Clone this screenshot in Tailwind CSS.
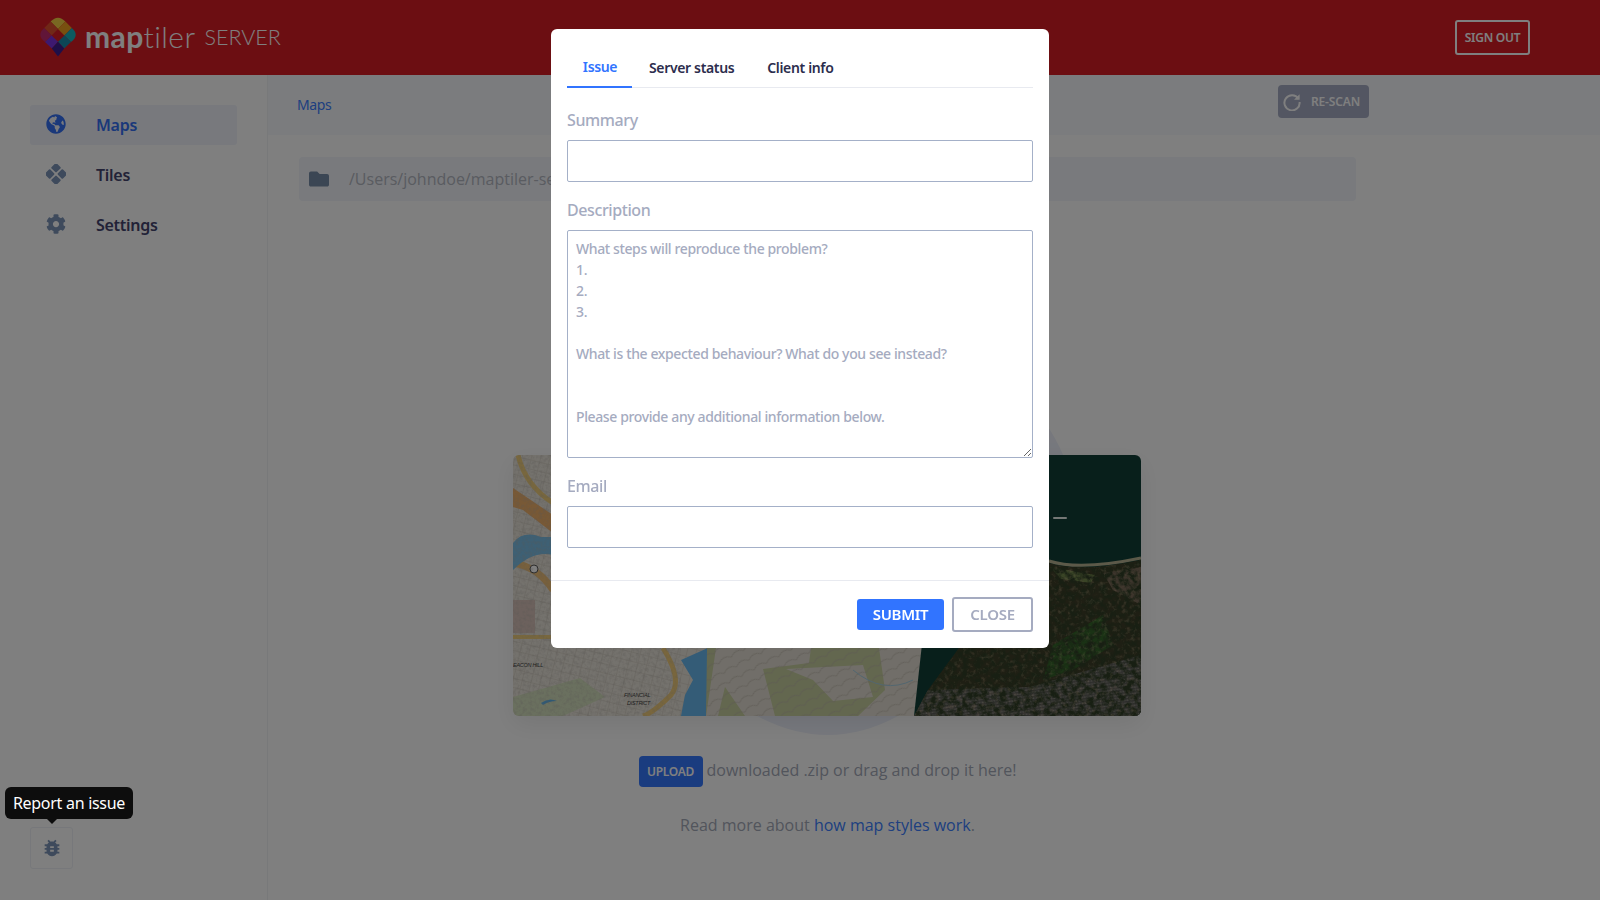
<!DOCTYPE html>
<html lang="en">
<head>
    <meta charset="UTF-8">
    <meta name="viewport" content="width=device-width, initial-scale=1.0">
    <title>MapTiler Server</title>
    <script src="https://cdn.jsdelivr.net/npm/@tailwindcss/browser@4"></script>
</head>
<body class="h-[900px] overflow-hidden bg-white font-['Noto_Sans',sans-serif] tracking-[-0.28px]">
    <!-- page under the dialog -->
    <header class="h-[75px] bg-[#d91d25] flex items-center justify-between pl-[40px] pr-[70px]">
        <div class="flex items-center">
            <svg class="w-[36px] h-[40px] mt-[-1px]" viewBox="0 0 36 40">
                <path d="M18 12 L10.6 4.6 Q18 -3 25.4 4.6 Z" fill="#f2cf45"/>
                <polygon points="10.6,4.6 18,12 11.6,18.4 4.2,11" fill="#e0502f"/>
                <polygon points="25.4,4.6 31.8,11 24.4,18.4 18,12" fill="#f0a020"/>
                <path d="M4.2 11 L11.6 18.4 L5 25 Q-4 18 4.2 11 Z" fill="#c22a70"/>
                <path d="M31.8 11 L24.4 18.4 L31 25 Q40 18 31.8 11 Z" fill="#18b4c0"/>
                <polygon points="11.6,18.4 18,24.8 11.8,31.4 5,25" fill="#7a32e0"/>
                <polygon points="24.4,18.4 31,25 24.2,31.4 18,24.8" fill="#1a8cac"/>
                <polygon points="18,24.8 24.2,31.4 18,39.5 11.8,31.4" fill="#3c1f90"/>
            </svg>
            <span class="ml-[9px] mt-[-3px] text-[30px] leading-none text-white font-['Lato',sans-serif] tracking-[0.4px]"><b class="font-bold">map</b><span class="font-light">tiler</span></span>
            <span class="ml-[9px] mt-[1px] text-[21.5px] leading-none text-white font-['Lato',sans-serif] font-light tracking-normal">SERVER</span>
        </div>
        <a class="h-[35px] w-[75px] border-2 border-white rounded-[3px] flex items-center justify-center text-[12px] font-semibold text-white">SIGN OUT</a>
    </header>

    <div class="flex h-[825px]">
        <aside class="w-[268px] shrink-0 border-r border-[#f1f2f4] pl-[30px] pr-[30px] pt-[30px] pb-[31px] flex flex-col justify-between">
            <nav class="flex flex-col gap-[10px]">
                <a class="h-[40px] rounded-[3px] bg-[#f0f3fa] flex items-center pl-[16px] text-[16px] font-semibold text-[#3470f5]">
                    <svg class="w-[20px] h-[20px] mr-[30px] mt-[-2px]" viewBox="0 0 496 512" fill="#3470f5"><path d="M248 8C111.03 8 0 119.03 0 256s111.03 248 248 248 248-111.03 248-248S384.97 8 248 8zm82.29 357.6c-3.9 3.88-7.99 7.95-11.31 11.28-2.99 3-5.1 6.7-6.17 10.71-1.51 5.66-2.73 11.38-4.77 16.87l-17.39 46.85c-13.76 3-28 4.69-42.65 4.69v-27.38c1.69-12.62-7.64-36.26-22.63-51.25-6-6-9.37-14.14-9.37-22.63v-32.01c0-11.64-6.27-22.34-16.46-27.97-14.37-7.95-34.81-19.06-48.81-26.11-11.48-5.78-22.1-13.14-31.65-21.75l-.8-.72a114.792 114.792 0 0 1-18.06-20.74c-9.38-13.77-24.66-36.42-34.59-51.14 20.47-45.5 57.36-82.04 103.2-101.89l24.01 12.01C203.48 89.74 216 82.01 216 70.11v-11.3c7.99-1.29 16.12-2.11 24.45-2.42l28.3 28.3c6.25 6.25 6.25 16.38 0 22.63L264 112l-10.34 10.34c-3.12 3.12-3.12 8.19 0 11.31l4.69 4.69c3.12 3.12 3.12 8.19 0 11.31l-8 8a8.008 8.008 0 0 1-5.67 2.34h-8.99c-2.08 0-4.08.81-5.58 2.27l-9.92 9.65a8.008 8.008 0 0 0-1.58 9.31l15.59 31.19c2.66 5.32-1.21 11.58-7.15 11.58h-5.64c-1.93 0-3.79-.7-5.24-1.96l-9.28-8.06a16.017 16.017 0 0 0-15.55-3.1l-31.17 10.39a11.95 11.95 0 0 0-8.17 11.34c0 4.53 2.56 8.66 6.61 10.69l11.08 5.54c9.41 4.71 19.79 7.16 30.31 7.16s22.59 27.29 32 32h66.75c8.49 0 16.62 3.37 22.63 9.37l13.69 13.69a30.503 30.503 0 0 1 8.93 21.57 46.536 46.536 0 0 1-13.72 32.98zM417 274.25c-5.79-1.45-10.84-5-14.15-9.97l-17.98-26.97a23.97 23.97 0 0 1 0-26.62l19.59-29.38c2.32-3.47 5.5-6.29 9.24-8.15l12.98-6.49C440.2 193.59 448 223.87 448 256c0 8.67-.74 17.16-1.82 25.54L417 274.25z"/></svg>
                    Maps
                </a>
                <a class="h-[40px] flex items-center pl-[16px] text-[16px] font-semibold text-[#45456f]">
                    <svg class="w-[20px] h-[20px] mr-[30px] mt-[-2px]" viewBox="0 0 20 20" fill="#7c94b8"><rect x="6.4" y="0.1" width="7.2" height="7.2" rx="1" transform="rotate(45 10 3.7)"/><rect x="6.4" y="12.7" width="7.2" height="7.2" rx="1" transform="rotate(45 10 16.3)"/><rect x="0.1" y="6.4" width="7.2" height="7.2" rx="1" transform="rotate(45 3.7 10)"/><rect x="12.7" y="6.4" width="7.2" height="7.2" rx="1" transform="rotate(45 16.3 10)"/></svg>
                    Tiles
                </a>
                <a class="h-[40px] flex items-center pl-[16px] text-[16px] font-semibold text-[#45456f]">
                    <svg class="w-[20px] h-[20px] mr-[30px] mt-[-2px]" viewBox="0 0 512 512" fill="#7c94b8"><path d="M487.4 315.7l-42.6-24.6c4.3-23.2 4.3-47 0-70.2l42.6-24.6c4.9-2.8 7.1-8.6 5.5-14-11.1-35.6-30-67.8-54.7-94.6-3.8-4.1-10-5.1-14.8-2.3L380.8 110c-17.9-15.4-38.5-27.3-60.8-35.1V25.8c0-5.6-3.9-10.5-9.4-11.7-36.7-8.2-74.3-7.8-109.2 0-5.5 1.2-9.4 6.1-9.4 11.7V75c-22.2 7.9-42.8 19.8-60.8 35.1L88.7 85.5c-4.9-2.8-11-1.9-14.8 2.3-24.7 26.7-43.6 58.9-54.7 94.6-1.7 5.4.6 11.2 5.5 14L67.3 221c-4.3 23.2-4.3 47 0 70.2l-42.6 24.6c-4.9 2.8-7.1 8.6-5.5 14 11.1 35.6 30 67.8 54.7 94.6 3.8 4.1 10 5.1 14.8 2.3l42.6-24.6c17.9 15.4 38.5 27.3 60.8 35.1v49.2c0 5.6 3.9 10.5 9.4 11.7 36.7 8.2 74.3 7.8 109.2 0 5.5-1.2 9.4-6.1 9.4-11.7v-49.2c22.2-7.9 42.8-19.8 60.8-35.1l42.6 24.6c4.9 2.8 11 1.9 14.8-2.3 24.7-26.7 43.6-58.9 54.7-94.6 1.5-5.5-.7-11.3-5.6-14.1zM256 336c-44.1 0-80-35.9-80-80s35.9-80 80-80 80 35.9 80 80-35.9 80-80 80z"/></svg>
                    Settings
                </a>
            </nav>
            <button class="w-[43px] h-[42px] border border-[#eef0f6] rounded-[3px] flex items-center justify-center">
                <svg class="w-[22px] h-[22px]" viewBox="0 0 24 24" fill="#7c94b8"><path d="M20 8h-2.81c-.45-.78-1.07-1.45-1.82-1.96L17 4.41 15.59 3l-2.17 2.17C12.96 5.06 12.49 5 12 5c-.49 0-.96.06-1.41.17L8.41 3 7 4.41l1.62 1.63C7.88 6.55 7.26 7.22 6.81 8H4v2h2.09c-.05.33-.09.66-.09 1v1H4v2h2v1c0 .34.04.67.09 1H4v2h2.81c1.04 1.79 2.97 3 5.19 3s4.15-1.21 5.19-3H20v-2h-2.09c.05-.33.09-.66.09-1v-1h2v-2h-2v-1c0-.34-.04-.67-.09-1H20V8zm-6 8h-4v-2h4v2zm0-4h-4v-2h4v2z"/></svg>
            </button>
        </aside>

        <main class="flex-1 min-w-0">
            <div class="h-[60px] bg-[#f6f8fc] flex items-start justify-between pl-[29px] pr-[231px] pt-[10px]">
                <a class="mt-[10px] text-[14px] leading-[20px] text-[#3c7eff] tracking-[-0.4px]">Maps</a>
                <button class="w-[91px] h-[33px] rounded-[4px] bg-[#a6acc4] flex items-center pl-[5px] gap-[10px] text-[12px] font-semibold text-white tracking-[-0.15px]">
                    <svg class="w-[18px] h-[18px]" viewBox="0 0 18 18" fill="none" stroke="#fff" stroke-width="2"><path d="M15.4 5.6A7.6 7.6 0 1 0 16.6 9"/><path d="M16.6 1.2v5.6H11z" fill="#fff" stroke="none"/></svg>
                    RE-SCAN
                </button>
            </div>
            <div class="pl-[31px] pr-[244px] pt-[22px] flex flex-col">
                <div class="h-[44px] rounded-[4px] bg-[#f2f4fa] flex items-center pl-[10px] text-[16px] tracking-normal text-[#b4b8c2] font-['Open_Sans',sans-serif]">
                    <svg class="w-[20px] h-[20px] mr-[20px]" viewBox="0 0 512 512" fill="#768ca8"><path d="M464 128H272l-64-64H48C21.49 64 0 85.49 0 112v288c0 26.51 21.49 48 48 48h416c26.51 0 48-21.49 48-48V176c0-26.51-21.49-48-48-48z"/></svg>
                    /Users/johndoe/maptiler-server
                </div>
                <div class="relative mt-[254px] flex flex-col items-center">
                    <!-- decorative blob behind the picture -->
                    <svg class="absolute left-[214px] top-0 w-[628px] h-[290px] overflow-visible" viewBox="0 0 628 290" fill="#eef1fb"><path d="M500 -70 Q536 -35 551 2 L385 261 Q315 299 244 261 Z"/></svg>
                    <div class="relative w-[628px] h-[261px] mr-px rounded-[6px] overflow-hidden shadow-[0_8px_24px_rgba(0,0,0,0.08)]">
                        <svg class="block" width="628" height="261" viewBox="0 0 628 261">
                            <defs>
                                <filter id="grit" x="0" y="0" width="100%" height="100%">
                                    <feTurbulence type="fractalNoise" baseFrequency="0.16" numOctaves="4" seed="7"/>
                                    <feColorMatrix values="0 0 0 0 0.03  0 0 0 0 0.05  0 0 0 0 0.02  3 0 0 0 -1"/>
                                </filter>
                                <filter id="glow" x="0" y="0" width="100%" height="100%">
                                    <feTurbulence type="fractalNoise" baseFrequency="0.22" numOctaves="3" seed="21"/>
                                    <feColorMatrix values="0 0 0 0 0.72  0 0 0 0 0.5  0 0 0 0 0.32  0 2.8 0 0 -1.45"/>
                                </filter>
                                <filter id="paper" x="0" y="0" width="100%" height="100%">
                                    <feTurbulence type="fractalNoise" baseFrequency="0.3" numOctaves="3" seed="3"/>
                                    <feColorMatrix values="0 0 0 0 0.45  0 0 0 0 0.43  0 0 0 0 0.4  2.4 0 0 0 -1"/>
                                </filter>
                                <pattern id="streets" width="9" height="9" patternUnits="userSpaceOnUse" patternTransform="rotate(14)">
                                    <path d="M0 0H9M0 0V9" stroke="#cfc9be" stroke-width="1" fill="none"/>
                                </pattern>
                                <pattern id="contours" width="14" height="11" patternUnits="userSpaceOnUse" patternTransform="rotate(-28)">
                                    <path d="M0 6Q7 0 14 6" stroke="#bdb4aa" stroke-width="0.8" fill="none"/>
                                </pattern>
                                <pattern id="city" width="3" height="3" patternUnits="userSpaceOnUse" patternTransform="rotate(-8)">
                                    <rect width="3" height="3" fill="#5a5a56"/>
                                    <rect x="0.5" y="0.5" width="2" height="1.5" fill="#8c8a82"/>
                                </pattern>
                                <clipPath id="land"><path d="M446 193 L500 125 L536 108 Q567 118 628 105 V261 H401 L415 235 Z"/></clipPath>
                            </defs>
                            <!-- street map -->
                            <rect width="210" height="261" fill="#e9e4da"/>
                            <rect width="210" height="261" fill="url(#streets)"/>
                            <polygon points="0,145 22,145 22,178 0,178" fill="#d9c3ba"/>
                            <polygon points="0,242 67,223 92,242 50,261 0,261" fill="#d5e0be"/>
                            <path d="M28 248q8-6 16-2q-8 0-14 4z" fill="#5fb2ea"/>
                            <polygon points="0,33 40,60 40,78 10,55 0,52" fill="#f0b26c"/>
                            <path d="M5 0 Q12 30 40 48" stroke="#f1cf7c" stroke-width="5" fill="none"/>
                            <path d="M0 108 Q25 112 40 135" stroke="#f0c078" stroke-width="7" fill="none"/>
                            <path d="M0 182H40" stroke="#f1cf7c" stroke-width="4"/>
                            <path d="M0 88 Q10 75 28 82 L40 82 L40 100 Q20 95 0 115Z" fill="#7cc0e8"/>
                            <circle cx="21" cy="114" r="4" fill="#fff" stroke="#555" stroke-width="1"/>
                            <path d="M150 193 Q170 225 158 240 Q140 258 130 261" stroke="#f2cd7a" stroke-width="5" fill="none"/>
                            <polygon points="168,205 197,192 193,261 168,261 172,240 180,225" fill="#69b8ee"/>
                            <rect width="168" height="261" filter="url(#paper)" opacity="0.35"/>
                            <text x="0" y="212" font-size="5.5" font-style="italic" fill="#444" font-family="Liberation Sans">EACON HILL</text>
                            <text x="111" y="242" font-size="5.5" font-style="italic" fill="#444" font-family="Liberation Sans">FINANCIAL</text>
                            <text x="114" y="250" font-size="5.5" font-style="italic" fill="#444" font-family="Liberation Sans">DISTRICT</text>
                            <!-- terrain map -->
                            <polygon points="197,0 430,0 401,261 193,261" fill="#c6ce9e"/>
                            <polygon points="203,193 298,193 296,208 250,214 262,261 232,261 212,232 205,261 193,261" fill="#e2ddd2"/>
                            <polygon points="273,214 350,210 360,242 320,246 300,225" fill="#e2ddd2"/>
                            <polygon points="366,193 412,193 401,261 345,261 372,235" fill="#e2ddd2"/>
                            <polygon points="197,0 430,0 401,261 193,261" fill="url(#contours)" opacity="0.8"/>
                            <path d="M340 215 Q370 240 400 225" stroke="#a5cde0" stroke-width="1" fill="none"/>
                            <path d="M408 240 L412 205" stroke="#f1cf7c" stroke-width="2" fill="none"/>
                            <!-- satellite -->
                            <polygon points="430,0 628,0 628,261 401,261" fill="#103f36"/>
                            <path d="M446 193 L500 125 L536 108 Q567 118 628 105 V261 H401 L415 235 Z" fill="#3e3f28"/>
                            <path d="M536 106 Q567 116 628 103" stroke="#b8b292" stroke-width="3" fill="none"/>
                            <polygon points="537,112 582,120 578,128 548,124" fill="#73884c"/>
                            <polygon points="540,190 590,160 600,190 560,215 530,225" fill="#35662a"/>
                            <polygon points="590,118 628,112 628,150 600,135" fill="#7a6a58"/>
                            <polygon points="401,261 415,235 517,232 628,200 628,261" fill="url(#city)"/>
                            <g clip-path="url(#land)">
                                <rect x="401" y="100" width="227" height="161" filter="url(#grit)"/>
                                <rect x="401" y="100" width="227" height="161" filter="url(#glow)" opacity="0.35"/>
                            </g>
                            <rect x="540" y="62" width="14" height="2" rx="1" fill="#e8f0ec"/>
                        </svg>
                    </div>
                    <p class="relative mt-[40px] h-[31px] flex items-center text-[16px] tracking-normal text-[#a4aab8] font-['Open_Sans',sans-serif]">
                        <button class="w-[64px] h-[31px] mr-[4px] rounded-[4px] bg-[#3478ff] text-[12px] font-semibold text-white font-['Noto_Sans',sans-serif] tracking-[-0.28px]">UPLOAD</button>
                        <span class="mt-[-3px]">downloaded .zip or drag and drop it here!</span>
                    </p>
                    <p class="relative mt-[26px] text-[16px] tracking-normal leading-[24px] text-[#a4aab8] font-['Open_Sans',sans-serif]">Read more about <a class="text-[#3c7eff]">how map styles work</a>.</p>
                </div>
            </div>
        </main>
    </div>

    <!-- dialog layer -->
    <div class="fixed inset-0 bg-black/50 flex justify-center items-start pt-[29px]">
        <div class="w-[498px] h-[619px] bg-white rounded-[6px] flex flex-col">
            <div class="mx-4 mt-[21px] h-[38px] border-b border-[#e8eaf0] flex text-[14px] font-semibold tracking-[-0.35px] text-[#2c2d4d]">
                <a class="h-[38px] w-[65px] border-b-2 border-[#3174ff] text-[#3174ff] flex items-center justify-center pb-[3px] pl-px">Issue</a>
                <a class="h-[37px] pl-[17px] pr-[16px] flex items-center pb-[3px]">Server status</a>
                <a class="h-[37px] px-[17px] flex items-center pb-[3px]">Client info</a>
            </div>
            <form class="px-4 pt-[20px] text-[16px] font-medium tracking-[-0.4px] text-[#a5abc0]">
                <label class="block leading-[24px] mb-[8px]">Summary</label>
                <input type="text" class="block w-full h-[42px] border border-[#a4b0c8] rounded-[2px] outline-none">
                <label class="block leading-[24px] mt-[16px] mb-[8px]">Description</label>
                <textarea class="block w-full h-[228px] border border-[#a4b0c8] rounded-[2px] px-[8px] pt-[7px] pb-[8px] text-[14px] leading-[21px] tracking-[-0.38px] outline-none placeholder:text-[#a5abc0]" placeholder="What steps will reproduce the problem?&#10;1.&#10;2.&#10;3.&#10;&#10;What is the expected behaviour? What do you see instead?&#10;&#10;&#10;Please provide any additional information below."></textarea>
                <label class="block leading-[24px] mt-[16px] mb-[8px]">Email</label>
                <input type="email" class="block w-full h-[42px] border border-[#a4b0c8] rounded-[2px] outline-none">
            </form>
            <div class="mt-[32px] flex-1 border-t border-[#e8eaf0] px-4 flex items-center justify-end gap-[8px] text-[15px] font-semibold">
                <button class="w-[87px] h-[31px] rounded-[3px] bg-[#3174ff] text-white">SUBMIT</button>
                <button class="w-[81px] h-[35px] rounded-[3px] border-2 border-[#a5abc0] text-[#a5abc0]">CLOSE</button>
            </div>
        </div>
    </div>

    <!-- tooltip over the bug button -->
    <div class="fixed left-[5px] top-[787px] w-[128px] h-[32px] rounded-[6px] bg-[#0d0d0d] flex items-center justify-center text-[16px] text-white">
        Report an issue
        <span class="absolute left-[41px] top-[31px] w-0 h-0 border-x-[6px] border-x-transparent border-t-[6px] border-t-[#0d0d0d]"></span>
    </div>
</body>
</html>
